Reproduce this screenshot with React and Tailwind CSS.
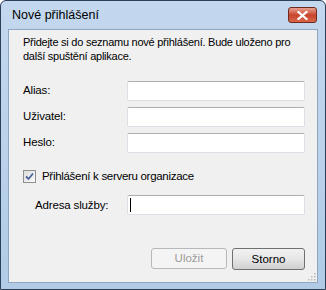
import React from "react";

const font = { fontFamily: '"Liberation Sans", Arial, sans-serif' };

function TextBox({ caret }) {
  return (
    <div className="relative w-[179px] h-[20px] bg-white border border-[#dbdfe6] border-t-[#abadb3] rounded-[2px]">
      {caret && <div className="absolute left-[2px] top-[2px] w-px h-[14px] bg-black" />}
    </div>
  );
}

function Row({ label, indent, caret }) {
  return (
    <div className="flex items-center h-[20px]">
      <span className={`${indent ? "pl-[12px]" : ""} w-[104px] text-[11.5px] tracking-[-0.15px] text-black`}>{label}</span>
      <TextBox caret={caret} />
    </div>
  );
}

function CheckBox() {
  return (
    <div className="w-[13px] h-[13px] border border-[#8e8f8f] bg-gradient-to-br from-[#dcdcdc] to-[#fbfbfb] flex items-center justify-center">
      <svg width="9" height="9" viewBox="0 0 9 9">
        <path d="M1 4.5 L3.5 7 L8 1.5" fill="none" stroke="#4a64a0" strokeWidth="1.8" />
      </svg>
    </div>
  );
}

export default function App() {
  return (
    <div
      className="w-[326px] h-[290px] flex flex-col border border-[#2a3f58] rounded-t-[6px] bg-gradient-to-b from-[#c3d8ee] to-[#b1cbe6] px-[7px] pb-[6px]"
      style={font}
    >
      <div className="h-[28px] flex items-center justify-between pl-[4px] pr-[1px]">
        <span className="text-[12.5px] text-black">Nové přihlášení</span>
        <div className="w-[29px] h-[16px] rounded-[3px] border border-[#6e2a1e] bg-gradient-to-b from-[#e8a090] via-[#c8452c] to-[#d9664a] flex items-center justify-center">
          <svg width="11" height="9" viewBox="0 0 11 9">
            <path d="M1.5 1 L9.5 8 M9.5 1 L1.5 8" stroke="white" strokeWidth="2.2" strokeLinecap="square" />
          </svg>
        </div>
      </div>
      <div className="relative flex-1 flex flex-col bg-[#f0f0f0] border border-[#8ea6c0] pl-[14px] pr-[12px] pt-[5px]">
        <p className="text-[11px] leading-[14px] tracking-[-0.25px] text-black whitespace-nowrap">
          Přidejte si do seznamu nové přihlášení. Bude uloženo pro
          <br />
          další spuštění aplikace.
        </p>
        <div className="flex flex-col gap-[6px] mt-[18px]">
          <Row label="Alias:" />
          <Row label="Uživatel:" />
          <Row label="Heslo:" />
        </div>
        <div className="flex items-center gap-[6px] mt-[15px]">
          <CheckBox />
          <span className="text-[11.5px] tracking-[-0.3px] text-black">Přihlášení k serveru organizace</span>
        </div>
        <div className="mt-[10px]">
          <Row label="Adresa služby:" indent caret />
        </div>
        <div className="flex justify-end gap-[5px] mt-[33px]">
          <div className="w-[76px] h-[21px] rounded-[3px] border border-[#b5b9bc] bg-[#f4f4f4] flex items-center justify-center text-[11.5px] text-[#9c9c9c]">
            Uložit
          </div>
          <div className="w-[73px] h-[22px] rounded-[3px] border border-[#707070] bg-gradient-to-b from-[#f2f2f2] via-[#e6e6e6] to-[#d0d0d0] flex items-center justify-center text-[11.5px] text-black">
            Storno
          </div>
        </div>
        <svg className="absolute right-[1px] bottom-[1px]" width="10" height="10" viewBox="0 0 10 10">
          {[[8, 2], [8, 5], [5, 5], [8, 8], [5, 8], [2, 8]].map(([x, y], i) => (
            <rect key={i} x={x} y={y} width="1.5" height="1.5" fill="#b8b8b8" />
          ))}
        </svg>
      </div>
    </div>
  );
}
